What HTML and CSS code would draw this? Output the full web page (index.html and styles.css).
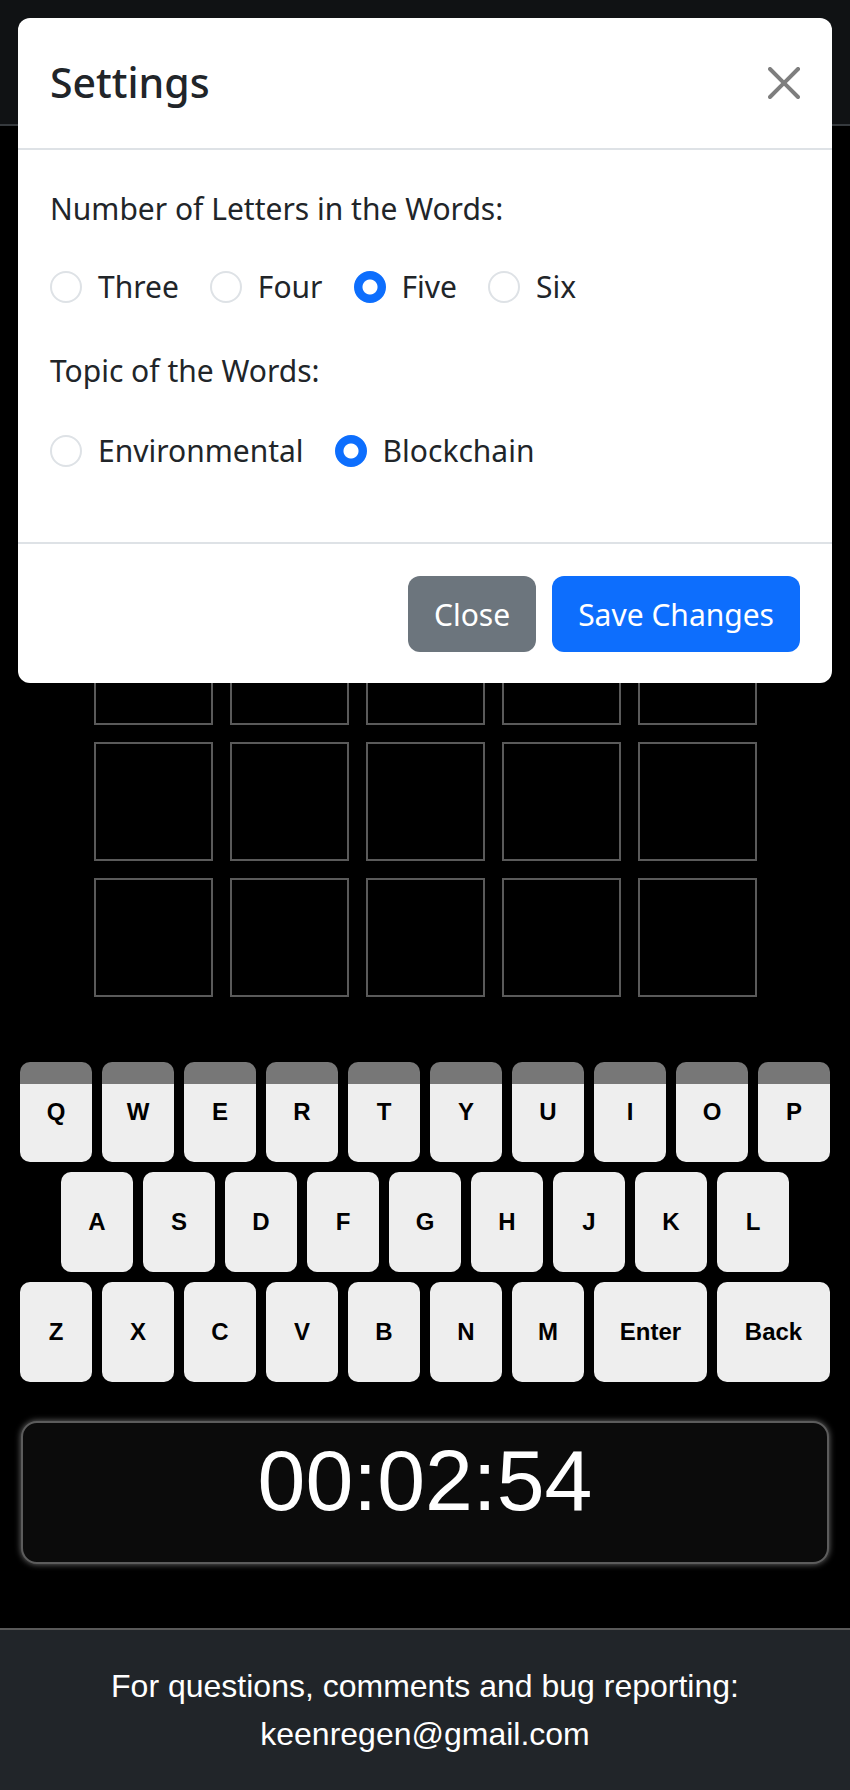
FILE: index.html
```html
<!DOCTYPE html>
<html lang="en">
<head>
<meta charset="utf-8">
<title>Word Game</title>
<link rel="stylesheet" href="styles.css">
</head>
<body>
<div class="app">
  <header class="topbar"></header>
  <main class="game">
    <div class="board">
      <div class="tile"></div><div class="tile"></div><div class="tile"></div><div class="tile"></div><div class="tile"></div>
      <div class="tile"></div><div class="tile"></div><div class="tile"></div><div class="tile"></div><div class="tile"></div>
      <div class="tile"></div><div class="tile"></div><div class="tile"></div><div class="tile"></div><div class="tile"></div>
      <div class="tile"></div><div class="tile"></div><div class="tile"></div><div class="tile"></div><div class="tile"></div>
      <div class="tile"></div><div class="tile"></div><div class="tile"></div><div class="tile"></div><div class="tile"></div>
      <div class="tile"></div><div class="tile"></div><div class="tile"></div><div class="tile"></div><div class="tile"></div>
    </div>
    <div class="keyboard">
      <div class="key-row">
        <button class="key">Q</button><button class="key">W</button><button class="key">E</button><button class="key">R</button><button class="key">T</button><button class="key">Y</button><button class="key">U</button><button class="key">I</button><button class="key">O</button><button class="key">P</button>
      </div>
      <div class="key-row">
        <button class="key">A</button><button class="key">S</button><button class="key">D</button><button class="key">F</button><button class="key">G</button><button class="key">H</button><button class="key">J</button><button class="key">K</button><button class="key">L</button>
      </div>
      <div class="key-row">
        <button class="key">Z</button><button class="key">X</button><button class="key">C</button><button class="key">V</button><button class="key">B</button><button class="key">N</button><button class="key">M</button><button class="key key-wide">Enter</button><button class="key key-wide">Back</button>
      </div>
    </div>
    <div class="timer">00:02:54</div>
  </main>
  <footer class="site-footer">
    <p>For questions, comments and bug reporting:</p>
    <p>keenregen@gmail.com</p>
  </footer>
</div>

<div class="backdrop"></div>

<div class="modal">
  <div class="modal-header">
    <h5 class="modal-title">Settings</h5>
    <button class="btn-close" aria-label="Close">
      <svg viewBox="0 0 16 16" width="32" height="32"><path d="M.293.293a1 1 0 0 1 1.414 0L8 6.586 14.293.293a1 1 0 1 1 1.414 1.414L9.414 8l6.293 6.293a1 1 0 0 1-1.414 1.414L8 9.414l-6.293 6.293a1 1 0 0 1-1.414-1.414L6.586 8 .293 1.707a1 1 0 0 1 0-1.414z"/></svg>
    </button>
  </div>
  <div class="modal-body">
    <p class="field-label">Number of Letters in the Words:</p>
    <div class="radio-row radio-row-first">
      <label class="check"><input type="radio" name="len"><span>Three</span></label>
      <label class="check"><input type="radio" name="len"><span>Four</span></label>
      <label class="check"><input type="radio" name="len" checked><span>Five</span></label>
      <label class="check"><input type="radio" name="len"><span>Six</span></label>
    </div>
    <p class="field-label field-label-second">Topic of the Words:</p>
    <div class="radio-row">
      <label class="check"><input type="radio" name="topic"><span>Environmental</span></label>
      <label class="check"><input type="radio" name="topic" checked><span>Blockchain</span></label>
    </div>
  </div>
  <div class="modal-footer">
    <button class="btn btn-secondary">Close</button>
    <button class="btn btn-primary">Save Changes</button>
  </div>
</div>
</body>
</html>
```

FILE: styles.css
```css
html, body {
  margin: 0;
  padding: 0;
  overflow: hidden;
}
body {
  background: #000;
  width: 850px;
  height: 1790px;
  position: relative;
  font-family: "Liberation Sans", Arial, sans-serif;
}
p { margin: 0; }

.app {
  display: flex;
  flex-direction: column;
  height: 1790px;
}

.topbar {
  height: 124px;
  background: #212529;
  border-bottom: 2px solid #6c757d;
}

.game {
  display: flex;
  flex-direction: column;
  align-items: center;
}

.board {
  margin-top: 72px;
  display: grid;
  grid-template-columns: repeat(5, 119px);
  grid-auto-rows: 119px;
  gap: 17px;
}
.tile {
  box-sizing: border-box;
  border: 2px solid #b4b4b4;
  background: #000;
}

.keyboard {
  margin-top: 65px;
  width: 850px;
  box-sizing: border-box;
  padding: 0 20px;
  display: flex;
  flex-direction: column;
  gap: 10px;
}
.key-row {
  display: flex;
  justify-content: center;
  gap: 10px;
}
.key {
  width: 72px;
  height: 100px;
  flex: 0 0 72px;
  border: none;
  border-radius: 10px;
  background: #eeeeee;
  color: #000;
  padding: 0;
  font-family: "Liberation Sans", Arial, sans-serif;
  font-weight: bold;
  font-size: 24px;
}
.key-wide {
  flex: 1 1 0;
  width: auto;
}

.timer {
  margin-top: 39px;
  width: 808px;
  height: 143px;
  box-sizing: border-box;
  border: 2px solid #5c5c5c;
  border-radius: 16px;
  background: #0b0b0b;
  box-shadow: 0 0 6px rgba(255, 255, 255, 0.45);
  color: #fff;
  text-align: center;
  font-family: "Liberation Sans", Arial, sans-serif;
  font-size: 86px;
  line-height: 99px;
  padding-top: 8px;
}

.site-footer {
  margin-top: auto;
  height: 162px;
  box-sizing: border-box;
  border-top: 2px solid #595959;
  background: #212529;
  padding: 32px 0 32px;
  color: #fff;
  text-align: center;
  font-family: "Liberation Sans", Arial, sans-serif;
  font-size: 32px;
  line-height: 48px;
}

.backdrop {
  position: absolute;
  top: 0;
  left: 0;
  width: 850px;
  height: 1084px;
  background: rgba(0, 0, 0, 0.5);
  z-index: 10;
}

.modal {
  position: absolute;
  top: 18px;
  left: 18px;
  width: 814px;
  background: #fff;
  border-radius: 12px;
  z-index: 20;
  color: #212529;
  font-family: "Noto Sans", "Open Sans", sans-serif;
  font-size: 30px;
}

.modal-header {
  height: 132px;
  box-sizing: border-box;
  border-bottom: 2px solid #dee2e6;
  padding: 0 32px;
  display: flex;
  align-items: center;
  justify-content: space-between;
}
.modal-title {
  margin: 0;
  font-size: 41px;
  font-weight: 500;
  line-height: 1.2;
}
.btn-close {
  width: 32px;
  height: 32px;
  padding: 0;
  border: none;
  background: transparent;
  display: flex;
}
.btn-close svg {
  fill: #000;
  opacity: 0.5;
}

.modal-body {
  padding: 36px 32px 69px;
}
.field-label {
  line-height: 45px;
  margin-bottom: 33px;
}
.field-label-second {
  margin-bottom: 35px;
}
.radio-row {
  display: flex;
  align-items: center;
  height: 45px;
}
.radio-row-first {
  margin-bottom: 39px;
}
.check {
  display: inline-flex;
  align-items: center;
  gap: 16px;
  margin-right: 31px;
  line-height: 45px;
}
.check input {
  appearance: none;
  -webkit-appearance: none;
  margin: 0;
  width: 32px;
  height: 32px;
  box-sizing: border-box;
  border: 2px solid #dee2e6;
  border-radius: 50%;
  background: #fff;
}
.check input:checked {
  border-color: #0d6efd;
  background: radial-gradient(circle, #fff 0 7px, #0d6efd 8px);
}

.modal-footer {
  border-top: 2px solid #dee2e6;
  padding: 32px 32px 31px;
  display: flex;
  justify-content: flex-end;
  gap: 16px;
}
.btn {
  height: 76px;
  padding: 0 26px;
  border: none;
  border-radius: 12px;
  color: #fff;
  font-family: "Noto Sans", "Open Sans", sans-serif;
  font-size: 30px;
}
.btn-secondary { background: #6c757d; }
.btn-primary { background: #0d6efd; }
```
